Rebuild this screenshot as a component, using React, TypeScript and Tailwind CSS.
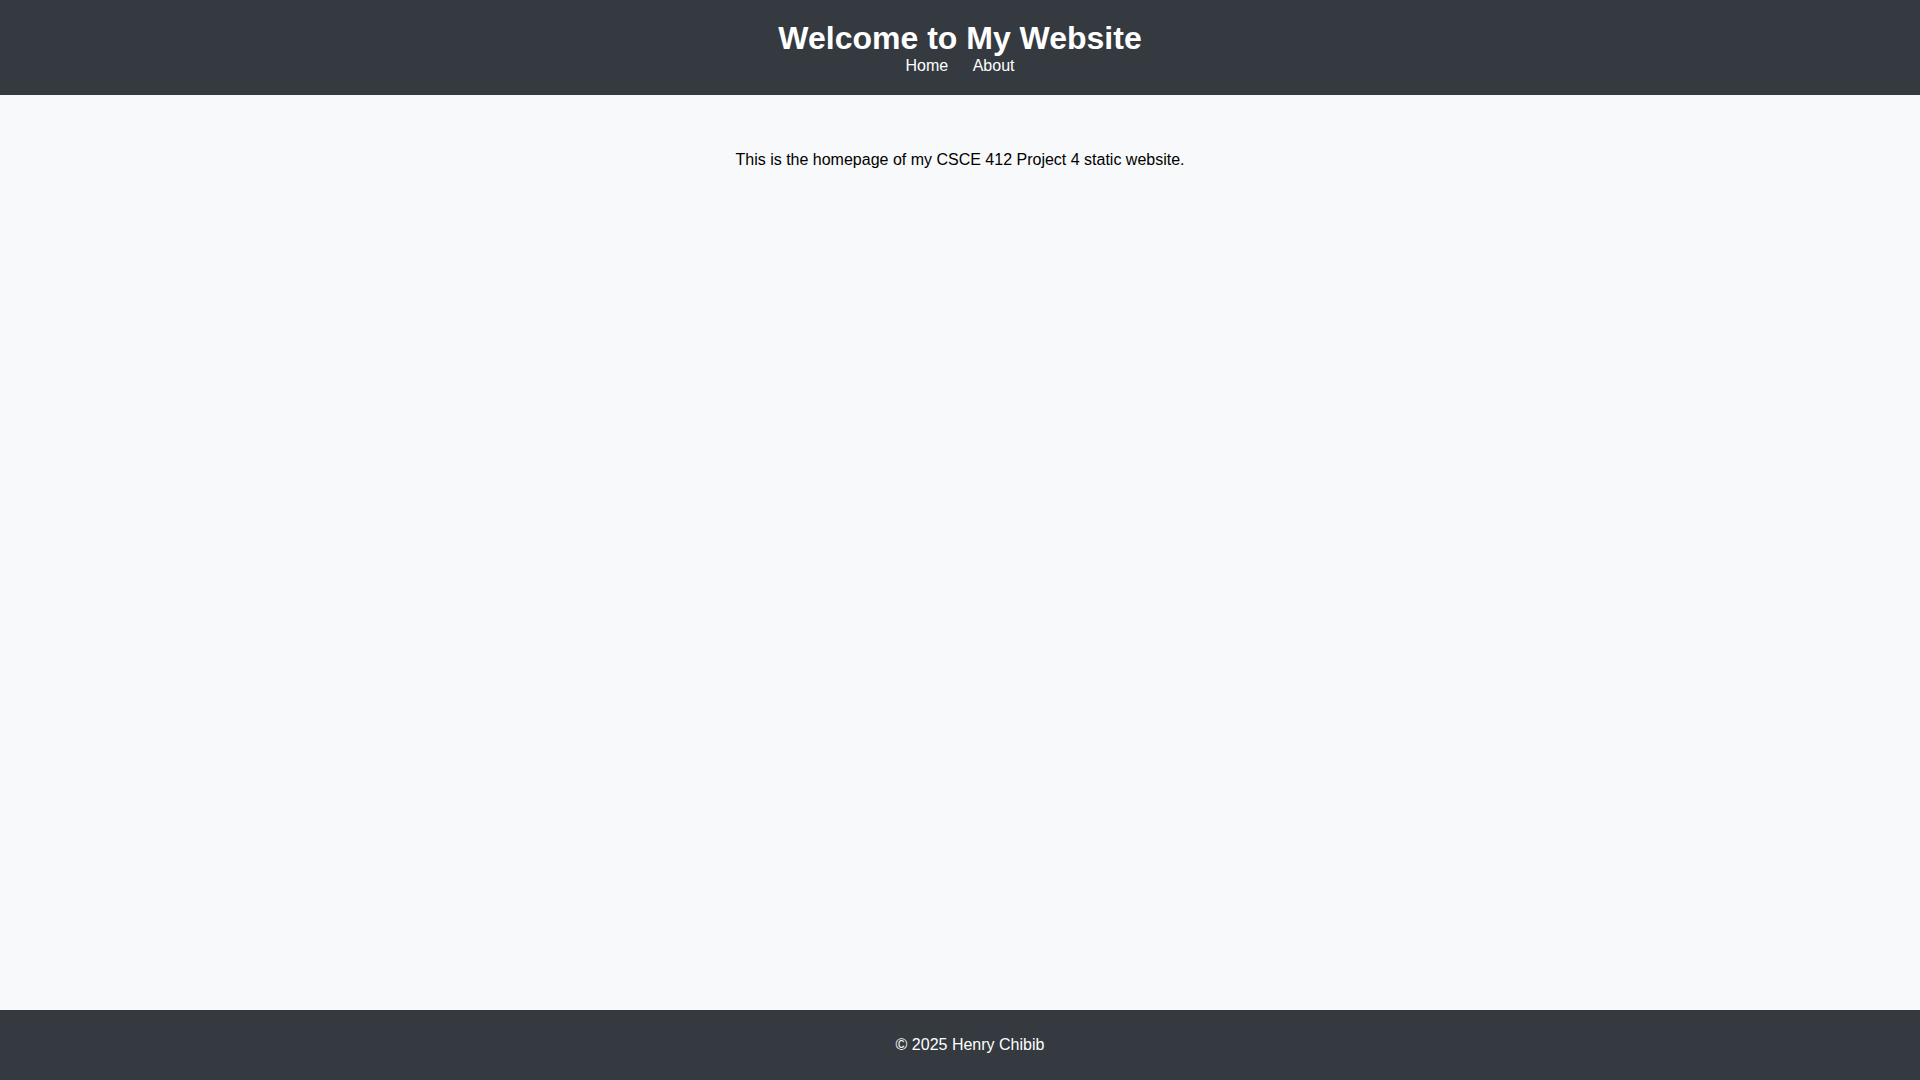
export default function App() {
  return (
    <div className="min-h-screen flex flex-col bg-[#f8f9fa] font-['Liberation_Sans',Arial,sans-serif] text-[16px] leading-[normal]">
      <header className="bg-[#343a40] text-white text-center py-5">
        <h1 className="text-[32px] font-bold leading-[normal] m-0">Welcome to My Website</h1>
        <nav>
          <a href="#" className="text-white mx-[10px]">Home</a>{" "}
          <a href="#" className="text-white mx-[10px]">About</a>
        </nav>
      </header>

      <main className="flex-1 pt-[56px] text-center">
        <p className="text-black">
          This is the homepage of my CSCE 412 Project 4 static website.
        </p>
      </main>

      <footer className="bg-[#343a40] text-white text-center py-[10px] pl-5">
        <p className="my-4">&copy; 2025 Henry Chibib</p>
      </footer>
    </div>
  );
}
